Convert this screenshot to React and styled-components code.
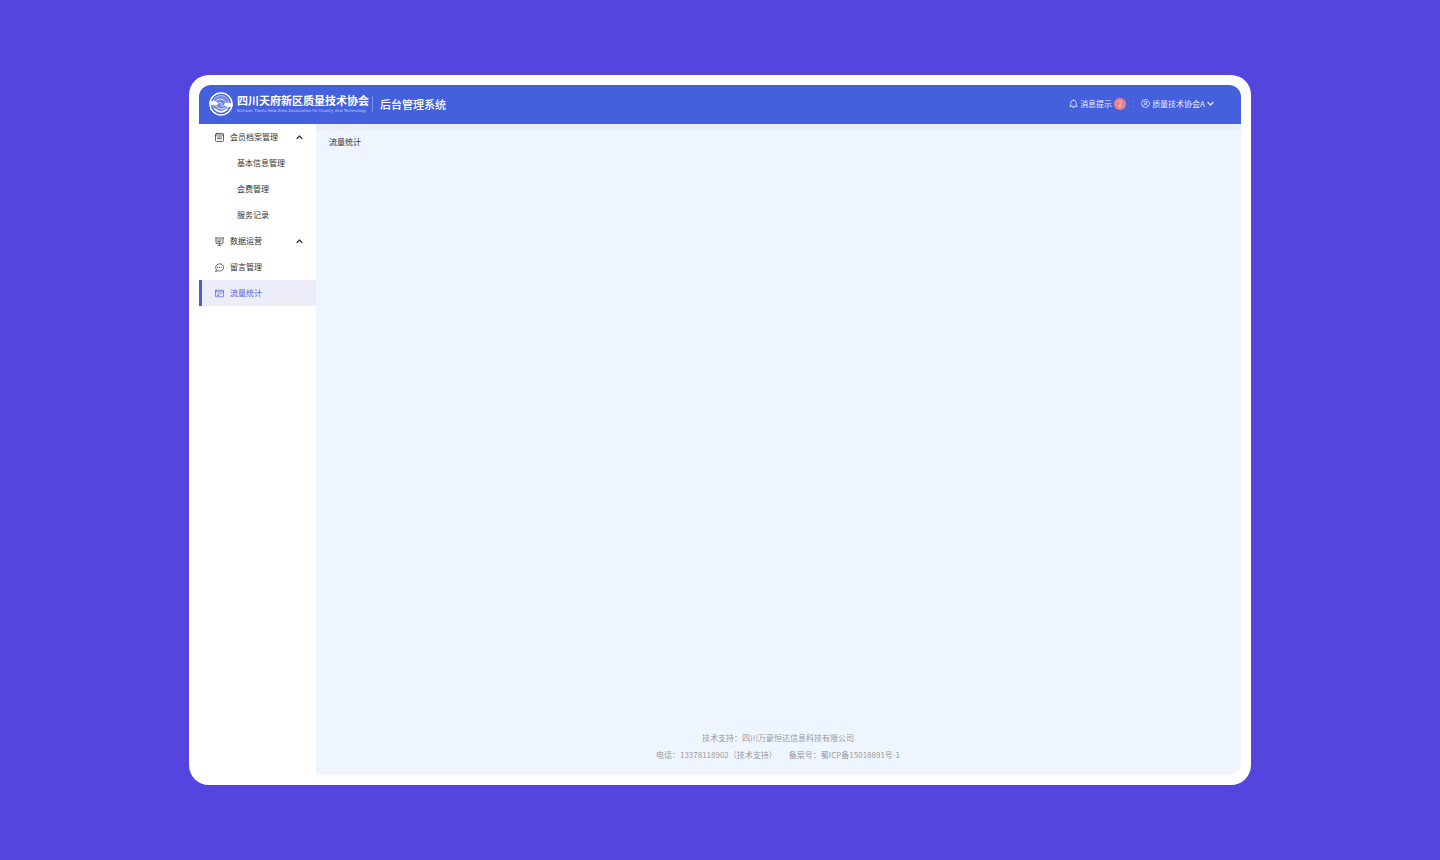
import React, { useState } from 'react'
import styled, { createGlobalStyle, css } from 'styled-components'

const GlobalStyle = createGlobalStyle`
  *, *::before, *::after {
    box-sizing: border-box;
  }
  body {
    margin: 0;
    background: #5544dd;
    color: #333;
    font-family: 'Noto Sans CJK SC', sans-serif;
    font-size: 8px;
    line-height: 16px;
  }
  h1, h2, p, ul {
    margin: 0;
    padding: 0;
    font-size: inherit;
    font-weight: inherit;
  }
  ul {
    list-style: none;
  }
`

const Page = styled.div`
  display: flex;
  min-height: 100vh;
  padding: 75px 189px;
`

const Frame = styled.div`
  display: flex;
  flex: 1;
  padding: 10px;
  border-radius: 20px;
  background: #fff;
`

const Window = styled.div`
  display: flex;
  flex: 1;
  flex-direction: column;
  min-width: 0;
  overflow: hidden;
  border-radius: 12px;
`

const Header = styled.header`
  display: flex;
  align-items: center;
  justify-content: space-between;
  height: 39px;
  padding: 0 27px 2px 10px;
  background: #4460dd;
  color: #fff;
  white-space: nowrap;
`

const Brand = styled.div`
  display: flex;
  align-items: center;
`

const BrandText = styled.div`
  margin: 0 3px 0 4px;
`

const OrgName = styled.h1`
  font-size: 11px;
  font-weight: 700;
  line-height: 14px;
`

const OrgNameEn = styled.p`
  color: #c3ccf6;
  font-family: 'DejaVu Sans', sans-serif;
  font-size: 4px;
  line-height: 8px;
`

const SystemName = styled.p`
  padding-left: 7px;
  border-left: 1px solid #7f92e9;
  font-size: 11px;
  font-weight: 500;
  line-height: 16px;
`

const Actions = styled.div`
  display: flex;
  align-items: center;
  gap: 7px;
`

const HeaderButton = styled.button`
  display: flex;
  align-items: center;
  gap: 2px;
  padding: 0;
  border: 0;
  background: none;
  color: #e8ecff;
  font: inherit;
  cursor: pointer;
`

const Badge = styled.span`
  width: 12px;
  height: 12px;
  border-radius: 50%;
  background: #f08088;
  color: #ffd9dc;
  line-height: 12px;
  text-align: center;
`

const Separator = styled.span`
  width: 1px;
  height: 6px;
  border: solid #7f92e9;
  border-width: 1px 0;
`

const Body = styled.div`
  display: flex;
  flex: 1;
`

const Sidebar = styled.nav`
  flex: none;
  width: 117px;
  background: #fff;
`

const itemStyle = css`
  display: flex;
  align-items: center;
  gap: 6px;
  width: 100%;
  height: 26px;
  padding: 0 13px;
  border: 0;
  border-left: 3px solid ${(p) => (p.$active ? '#4460dd' : 'transparent')};
  background: ${(p) => (p.$active ? '#ecedf9' : 'none')};
  color: ${(p) => (p.$active ? '#5468e0' : '#333')};
  font: inherit;
  text-align: left;
  text-decoration: none;
  cursor: pointer;
`

const GroupButton = styled.button`
  ${itemStyle}
`

const ItemLink = styled.a`
  ${itemStyle}
  ${(p) => p.$sub && 'padding-left: 35px;'}
`

const Label = styled.span`
  flex: 1;
`

const Content = styled.main`
  display: flex;
  flex: 1;
  flex-direction: column;
  justify-content: space-between;
  padding: 10px 14px 12px 13px;
  background: linear-gradient(#e8edf7, #e9eef8 5px, #eef5fe 8px);
`

const Footer = styled.footer`
  color: #999;
  line-height: 17px;
  text-align: center;
`

const Contact = styled.p`
  display: flex;
  justify-content: center;
  gap: 12px;
`

const Svg = styled.svg`
  flex: none;
  fill: none;
  stroke: currentColor;
  stroke-linecap: round;
  stroke-linejoin: round;
`

const Icon = ({ size = 9, children }) => (
  <Svg width={size} height={size} viewBox="0 0 18 18" strokeWidth="1.5" aria-hidden="true">
    {children}
  </Svg>
)

const icons = {
  archive: (
    <Icon>
      <rect x="1" y="1" width="16" height="16" rx="2" />
      <path d="M1 4h16M5 8h8M5 11.5h8" />
    </Icon>
  ),
  board: (
    <Icon>
      <path d="M1 2h16M2 2v10.500h14V2M5.500 6h7M5.500 9h5M9 12.500V16M6 16.500h6" />
    </Icon>
  ),
  message: (
    <Icon>
      <path d="M1.500 16.500l1.200-3.500A8 7.300 0 1 1 6 15.600z" />
      <path d="M5.500 9h.1M9 9h.1M12.500 9h.1" strokeWidth="2" />
    </Icon>
  ),
  traffic: (
    <Icon>
      <rect x="1" y="2.500" width="16" height="13" rx="1" />
      <path d="M1 5.500h16M4.500 10.500l3-1.500 2.500 1.500 3.500-2M4.500 13h3" />
    </Icon>
  ),
}

const Logo = () => (
  <Svg width="24" height="24" viewBox="0 0 48 48" strokeWidth="2" aria-hidden="true">
    <circle cx="24" cy="24" r="22" strokeWidth="3" />
    <circle cx="24" cy="24" r="17" fill="#7187e6" stroke="#b9c4f5" />
    <path d="M2 20l9-2 7 5-4 3-11-1zM46 28l-9 2-7-5 4-3 11 1z" fill="#fff" />
    <path d="M13 19c6-7 14-6 20 0M35 29c-6 7-14 6-20 0M17 24c4-5 9-3 8 1s3 5 7 0" stroke="#e5eaff" />
    <path d="M12 34c7 7 17 7 24 0" stroke="#fff" strokeWidth="3" />
  </Svg>
)

const Chevron = ({ up }) => (
  <Svg width="7" height="7" viewBox="0 0 14 14" strokeWidth="2.5" aria-hidden="true">
    <path d={up ? 'M2 9l5-5 5 5' : 'M2 5l5 5 5-5'} />
  </Svg>
)

const menu = [
  {
    name: '会员档案管理',
    icon: 'archive',
    items: ['基本信息管理', '会费管理', '服务记录'],
  },
  { name: '数据运营', icon: 'board', items: [] },
  { name: '留言管理', icon: 'message' },
  { name: '流量统计', icon: 'traffic', active: true },
]

const MenuGroup = ({ name, icon, items }) => {
  const [open, setOpen] = useState(true)
  return (
    <li>
      <GroupButton type="button" aria-expanded={open} onClick={() => setOpen(!open)}>
        {icons[icon]}
        <Label>{name}</Label>
        <Chevron up={open} />
      </GroupButton>
      {open && items.length > 0 && (
        <ul>
          {items.map((item) => (
            <li key={item}>
              <ItemLink href="#" $sub>
                {item}
              </ItemLink>
            </li>
          ))}
        </ul>
      )}
    </li>
  )
}

const App = () => (
  <>
    <GlobalStyle />
    <Page>
      <Frame>
        <Window>
          <Header>
            <Brand>
              <Logo />
              <BrandText>
                <OrgName>四川天府新区质量技术协会</OrgName>
                <OrgNameEn>Sichuan Tianfu New Area Association for Quality And Technology</OrgNameEn>
              </BrandText>
              <SystemName>后台管理系统</SystemName>
            </Brand>
            <Actions>
              <HeaderButton type="button">
                <Icon>
                  <path d="M1.500 14.500h15M3.500 14.500V8a5.500 5.500 0 0 1 11 0v6.500M9 1v1.500M7.500 16.800h3" />
                </Icon>
                消息提示
                <Badge>2</Badge>
              </HeaderButton>
              <Separator />
              <HeaderButton type="button">
                <Icon>
                  <circle cx="9" cy="9" r="8" />
                  <circle cx="9" cy="7" r="2.800" />
                  <path d="M3.800 14.500c1-5 9.400-5 10.400 0" />
                </Icon>
                质量技术协会A
                <Chevron />
              </HeaderButton>
            </Actions>
          </Header>
          <Body>
            <Sidebar>
              <ul>
                {menu.map((entry) =>
                  entry.items ? (
                    <MenuGroup key={entry.name} {...entry} />
                  ) : (
                    <li key={entry.name}>
                      <ItemLink
                        href="#"
                        $active={entry.active}
                        aria-current={entry.active ? 'page' : undefined}
                      >
                        {icons[entry.icon]}
                        <Label>{entry.name}</Label>
                      </ItemLink>
                    </li>
                  )
                )}
              </ul>
            </Sidebar>
            <Content>
              <h2>流量统计</h2>
              <Footer>
                <p>技术支持：四川万豪恒达信息科技有限公司</p>
                <Contact>
                  <span>电话：13378118902（技术支持）</span>
                  <span>备案号：蜀ICP备15018891号-1</span>
                </Contact>
              </Footer>
            </Content>
          </Body>
        </Window>
      </Frame>
    </Page>
  </>
)

export default App
